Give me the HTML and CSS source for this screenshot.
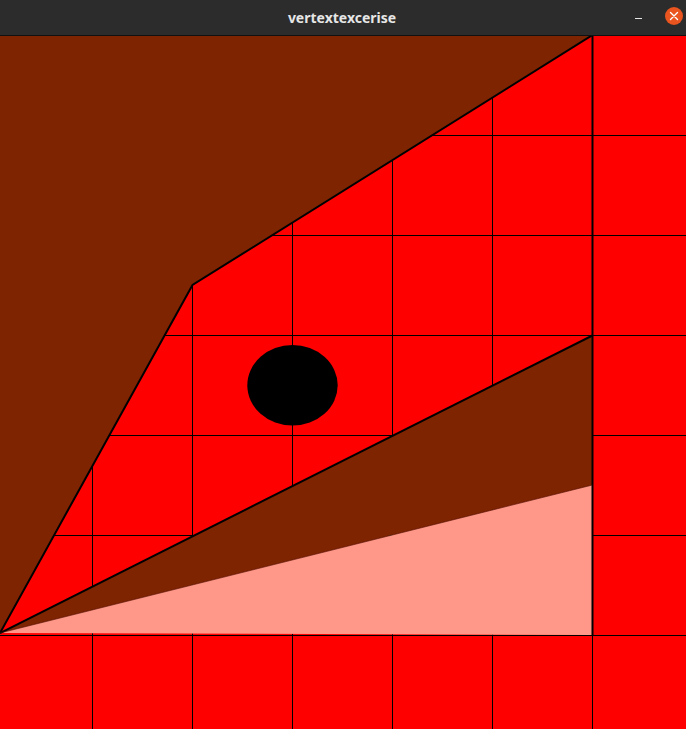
FILE: index.html
```html
<!DOCTYPE html>
<html>
<head>
<meta charset="utf-8">
<link rel="stylesheet" href="styles.css">
</head>
<body>
<div class="window">
  <header class="titlebar">
    <span class="title">vertextexcerise</span>
    <div class="controls">
      <span class="minimize"></span>
      <span class="close">
        <svg width="18" height="18" viewBox="0 0 18 18"><path d="M5.5 5.5 L12.5 12.5 M12.5 5.5 L5.5 12.5" stroke="#fff" stroke-width="1.4" stroke-linecap="round"/></svg>
      </span>
    </div>
  </header>
  <svg class="canvas" width="686" height="693" viewBox="0 36 686 693" shape-rendering="geometricPrecision">
    <rect x="0" y="35" width="686" height="694" fill="#ff0000"/>
    <g stroke="#000" stroke-width="1" shape-rendering="crispEdges">
      <line x1="92.5" y1="35" x2="92.5" y2="729"/>
      <line x1="192.5" y1="35" x2="192.5" y2="729"/>
      <line x1="292.5" y1="35" x2="292.5" y2="729"/>
      <line x1="392.5" y1="35" x2="392.5" y2="729"/>
      <line x1="492.5" y1="35" x2="492.5" y2="729"/>
      <line x1="592.5" y1="35" x2="592.5" y2="729"/>
      <line x1="0" y1="135.5" x2="686" y2="135.5"/>
      <line x1="0" y1="235.5" x2="686" y2="235.5"/>
      <line x1="0" y1="335.5" x2="686" y2="335.5"/>
      <line x1="0" y1="435.5" x2="686" y2="435.5"/>
      <line x1="0" y1="535.5" x2="686" y2="535.5"/>
    </g>
    <polygon points="0,35 592.5,35 192.5,285 0,633" fill="#7f2400"/>
    <polygon points="0,633 592.5,335 592.5,485" fill="#7f2400"/>
    <polygon points="0,633 592.5,485 592.5,635" fill="#ff9888"/>
    <line x1="0" y1="635.5" x2="686" y2="635.5" stroke="#000" stroke-width="1" shape-rendering="crispEdges"/>
    <polyline points="0,633 192.5,285 592.5,35" fill="none" stroke="#000" stroke-width="2"/>
    <line x1="0" y1="633" x2="592.5" y2="335.5" stroke="#000" stroke-width="2"/>
    <line x1="592.5" y1="35" x2="592.5" y2="635" stroke="#000" stroke-width="2"/>
    <line x1="0" y1="633" x2="592.5" y2="485" stroke="#3a1000" stroke-width="0.6"/>
    <ellipse cx="292.5" cy="385.3" rx="45.2" ry="40.3" fill="#000"/>
  </svg>
</div>
</body>
</html>
```

FILE: styles.css
```css
html, body {
  margin: 0;
  padding: 0;
  background: #000;
}
.window {
  width: 686px;
  height: 729px;
  overflow: hidden;
  display: flex;
  flex-direction: column;
}
.titlebar {
  height: 36px;
  flex: 0 0 36px;
  background: #2c2c2c;
  border-bottom: 1px solid #111;
  display: flex;
  align-items: center;
  justify-content: center;
  position: relative;
  box-sizing: border-box;
}
.title {
  font-family: "Noto Sans", "DejaVu Sans", sans-serif;
  font-weight: 700;
  font-size: 14px;
  color: #e6e6e6;
  margin-left: -2px;
}
.controls {
  position: absolute;
  right: 3px;
  top: 7px;
  display: flex;
  align-items: center;
  gap: 23px;
}
.minimize {
  display: block;
  width: 7px;
  height: 1px;
  background: #e6e6e6;
  margin-top: 4px;
}
.close {
  display: flex;
  width: 18px;
  height: 18px;
  border-radius: 50%;
  background: #e9541f;
}
.canvas {
  display: block;
  flex: 0 0 auto;
}
```
